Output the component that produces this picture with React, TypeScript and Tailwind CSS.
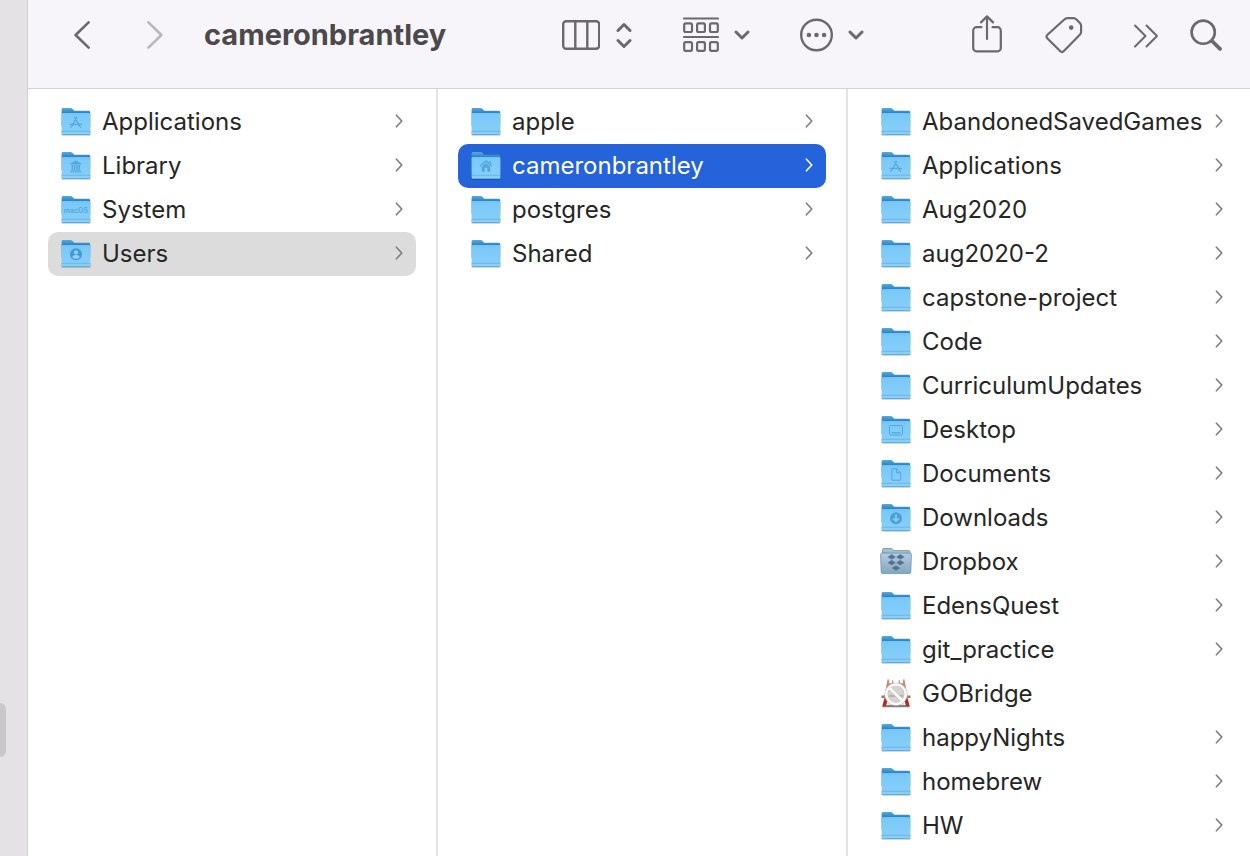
import type { ReactNode } from "react";

type Glyph = "apps" | "library" | "macos" | "user" | "home" | "desktop" | "document" | "download";

type Entry = {
  name: string;
  glyph?: Glyph;
  icon?: "dropbox" | "bridge";
  leaf?: boolean;
  state?: "path" | "active";
};

const root: Entry[] = [
  { name: "Applications", glyph: "apps" },
  { name: "Library", glyph: "library" },
  { name: "System", glyph: "macos" },
  { name: "Users", glyph: "user", state: "path" },
];

const users: Entry[] = [
  { name: "apple" },
  { name: "cameronbrantley", glyph: "home", state: "active" },
  { name: "postgres" },
  { name: "Shared" },
];

const home: Entry[] = [
  { name: "AbandonedSavedGames" },
  { name: "Applications", glyph: "apps" },
  { name: "Aug2020" },
  { name: "aug2020-2" },
  { name: "capstone-project" },
  { name: "Code" },
  { name: "CurriculumUpdates" },
  { name: "Desktop", glyph: "desktop" },
  { name: "Documents", glyph: "document" },
  { name: "Downloads", glyph: "download" },
  { name: "Dropbox", icon: "dropbox" },
  { name: "EdensQuest" },
  { name: "git_practice" },
  { name: "GOBridge", icon: "bridge", leaf: true },
  { name: "happyNights" },
  { name: "homebrew" },
  { name: "HW" },
];

const ink = "#55a6da";

function GlyphMark({ glyph }: { glyph: Glyph }) {
  switch (glyph) {
    case "apps":
      return (
        <g stroke={ink} strokeWidth="1.3" strokeLinecap="round" fill="none">
          <path d="M16.6 11.5 12 20M14.8 11.5l4.8 8.7M10 18.3h7.3M19.4 18.3h2.2M11.2 20.6l-.3.5M20.2 20.6l.4.6" />
        </g>
      );
    case "library":
      return (
        <g fill={ink}>
          <path d="M10.2 13.6 15.8 10.4l5.6 3.2v.8H10.2zM10.8 20.2h10v.8h-10zM10 21.5h11.6v.9H10z" />
          <path d="M11.6 15h1.5v4.8h-1.5zM13.9 15h1.5v4.8h-1.5zM16.2 15h1.5v4.8h-1.5zM18.5 15H20v4.8h-1.5z" />
        </g>
      );
    case "macos":
      return (
        <text x="15.8" y="18.6" textAnchor="middle" fontSize="7" fontWeight="600" fontFamily="Inter, sans-serif" fill={ink}>
          macOS
        </text>
      );
    case "user":
      return (
        <g>
          <circle cx="16" cy="16.2" r="6" fill="#4598d0" />
          <circle cx="16" cy="14.4" r="2.1" fill="#8fd0fa" />
          <path d="M12.2 19.2c.6-1.7 2-2.3 3.8-2.3s3.2.6 3.8 2.3c-1 1-2.3 1.5-3.8 1.5s-2.8-.5-3.8-1.5z" fill="#8fd0fa" />
        </g>
      );
    case "home":
      return (
        <g fill={ink}>
          <path d="M16 10 22.4 15.6l-.9 1L16 11.9l-5.5 4.7-.9-1zM19.3 10.9h1.6v3l-1.6-1.4z" />
          <path d="M11.8 16.5 16 13l4.2 3.5v5.2h-2.8v-3.9h-2.8v3.9h-2.8z" />
        </g>
      );
    case "desktop":
      return (
        <g fill="none" stroke={ink} strokeWidth="1">
          <rect x="9.5" y="11.5" width="13" height="9.5" rx="1" />
          <path d="M11.5 18.7h9" strokeWidth="1.3" />
        </g>
      );
    case "document":
      return (
        <path
          d="M12.5 10.7h4.3l3.9 4v6.8a.7.7 0 0 1-.7.7h-7.5a.7.7 0 0 1-.7-.7v-10.1a.7.7 0 0 1 .7-.7zM16.6 10.9v3.9h3.9"
          fill="none"
          stroke={ink}
          strokeWidth="1"
        />
      );
    case "download":
      return (
        <g>
          <circle cx="16" cy="16.2" r="6" fill="#4fa0d6" />
          <path d="M16 12.6v6.6M13.2 16.5l2.8 2.8 2.8-2.8" fill="none" stroke="#8fd0fa" strokeWidth="1.5" />
        </g>
      );
  }
}

function Folder({ glyph }: { glyph?: Glyph }) {
  return (
    <svg viewBox="0 0 32 32" className="size-8 shrink-0" aria-hidden="true">
      <defs>
        <linearGradient id="front" x1="0" y1="0" x2="0" y2="1">
          <stop offset="0" stopColor="#6fc2f6" />
          <stop offset="0.12" stopColor="#7ac9f8" />
          <stop offset="1" stopColor="#89cffa" />
        </linearGradient>
        <linearGradient id="back" x1="0" y1="0" x2="0" y2="1">
          <stop offset="0" stopColor="#56abdf" />
          <stop offset="0.25" stopColor="#3285c5" />
          <stop offset="1" stopColor="#3285c5" />
        </linearGradient>
      </defs>
      <rect x="1.4" y="24" width="29.2" height="5.8" rx="1.5" fill="#000" opacity="0.22" />
      <path d="M1.6 3.4c0-.8.6-1.4 1.4-1.4h7.2c1.1 0 1.7.3 2.4 1l.9.9c.6.6 1.1.8 2 .8h13.1c.9 0 1.6.6 1.6 1.5V20H1.6z" fill="url(#back)" />
      <path d="M1.6 8.2c0-.8.6-1.3 1.4-1.3h26c.8 0 1.4.5 1.4 1.3v19.2c0 .9-.6 1.5-1.4 1.5H3c-.8 0-1.4-.6-1.4-1.5z" fill="url(#front)" />
      <path d="M2 25.3h28" stroke="#60b2e8" strokeWidth="0.8" />
      <path d="M2.2 28.5h27.6" stroke="#5aa6d8" strokeWidth="0.8" />
      {glyph && <GlyphMark glyph={glyph} />}
    </svg>
  );
}

function DropboxFolder() {
  return (
    <svg viewBox="0 0 32 32" className="size-8 shrink-0" aria-hidden="true">
      <defs>
        <linearGradient id="steel" x1="0" y1="0" x2="0" y2="1">
          <stop offset="0" stopColor="#b3cde0" />
          <stop offset="1" stopColor="#82a6c1" />
        </linearGradient>
      </defs>
      <path d="M2.5 7V3.7c0-.7.5-1.2 1.2-1.2h7.6c.7 0 1.1.3 1.4.8l.8 1.3h15.3c.8 0 1.2.5 1.2 1.2V8z" fill="#a3c0d4" stroke="#728fa5" strokeWidth="0.8" />
      <path d="M.6 8.3c0-.7.5-1.2 1.2-1.2h28.4c.7 0 1.2.5 1.2 1.2l-.6 18c0 .8-.5 1.3-1.3 1.3h-27c-.8 0-1.3-.5-1.3-1.3z" fill="url(#steel)" stroke="#7391a8" strokeWidth="0.8" />
      <g fill="#527391">
        <path d="M11.7 8.3l4.1 2.6-4.1 2.6-4.2-2.6zM20.3 8.3l4.2 2.6-4.2 2.6-4.1-2.6zM11.7 14.1l4.1 2.6-4.1 2.6-4.2-2.6zM20.3 14.1l4.2 2.6-4.2 2.6-4.1-2.6zM16 19.4l4.3 2.7-4.3 2.7-4.3-2.7z" />
      </g>
    </svg>
  );
}

function BridgeApp() {
  return (
    <svg viewBox="0 0 32 32" className="size-8 shrink-0" aria-hidden="true">
      <path d="M8 7h16v20H8z" fill="#e6e4e2" />
      <path d="M1.5 17.5h29V20h-29z" fill="#8a7c78" />
      <path d="M6 27h20l4 2.2H2z" fill="#85807e" />
      <path d="M7.6 1.2h1l.6 4H12l.3-3h1l.2 6L8.5 20 6 28.5H2.5z" fill="#d08571" />
      <path d="M24.4 1.2h-1l-.6 4H20l-.3-3h-1l-.2 6 5 11.8 2.5 8.5h3.5z" fill="#d08571" />
      <path d="M5.5 18 2.2 28.5h3.3L7.9 21zM26.5 18l3.3 10.5h-3.3L24.1 21z" fill="#a82f24" />
      <circle cx="16" cy="16.3" r="9.3" fill="#d6d3d2" />
      <path d="M9 16.8h14V19H9z" fill="#c4aca7" />
      <circle cx="16" cy="16.3" r="9.7" fill="none" stroke="#bab7b6" strokeWidth="3.4" />
      <path d="M9.5 9.8 22.5 22.8" stroke="#bab7b6" strokeWidth="3.8" />
      <circle cx="16" cy="16.3" r="9.7" fill="none" stroke="#fbfbfb" strokeWidth="2.6" />
      <path d="M9.2 9.5 22.8 23.1" stroke="#fbfbfb" strokeWidth="2.9" />
    </svg>
  );
}

function Disclosure({ active }: { active?: boolean }) {
  return (
    <svg viewBox="0 0 8 16" className={active ? "h-4 w-2 shrink-0 text-white" : "h-4 w-2 shrink-0 text-[#7d7d7d]"} aria-hidden="true">
      <path d="M1.4 1.2l5.4 5.8-5.4 5.8" fill="none" stroke="currentColor" strokeWidth="1.6" strokeLinecap="round" strokeLinejoin="round" />
    </svg>
  );
}

const rowStyles = {
  plain: "flex h-11 w-full items-center rounded-[10px] pr-[13px] pl-3 text-left text-[#262626]",
  path: "flex h-11 w-full items-center rounded-[10px] bg-[#dcdcdc] pr-[13px] pl-3 text-left text-[#262626]",
  active: "flex h-11 w-full items-center rounded-[10px] bg-[#2463d9] pr-[13px] pl-3 text-left text-white",
};

function Column({ label, entries, className }: { label: string; entries: Entry[]; className: string }) {
  return (
    <ul aria-label={label} className={className}>
      {entries.map((e) => (
        <li key={e.name}>
          <button type="button" className={rowStyles[e.state ?? "plain"]}>
            {e.icon === "dropbox" ? <DropboxFolder /> : e.icon === "bridge" ? <BridgeApp /> : <Folder glyph={e.glyph} />}
            <span className="min-w-0 flex-1 pl-[10px] whitespace-nowrap">{e.name}</span>
            {!e.leaf && <Disclosure active={e.state === "active"} />}
          </button>
        </li>
      ))}
    </ul>
  );
}

function Tool({ label, className, children }: { label: string; className: string; children: ReactNode }) {
  return (
    <button type="button" aria-label={label} className={className}>
      {children}
    </button>
  );
}

const line = { fill: "none", stroke: "currentColor", strokeLinecap: "round", strokeLinejoin: "round" } as const;

function DownChevron() {
  return (
    <svg viewBox="0 0 16 10" className="h-[10px] w-4" {...line} strokeWidth="3">
      <path d="M2 2l6 6 6-6" />
    </svg>
  );
}

function Toolbar() {
  return (
    <header className="flex h-[89px] shrink-0 items-center border-b border-[#d5d3d6] bg-[#f7f5f9] pr-7 pb-[18px] pl-[46px] text-[#6b696c]">
      <Tool label="Back" className="shrink-0">
        <svg viewBox="0 0 16 28" className="h-7 w-4" {...line} strokeWidth="2.6">
          <path d="M14.6 1.4 1.6 14l13 12.6" />
        </svg>
      </Tool>
      <Tool label="Forward" className="ml-[57px] shrink-0 text-[#b9b7bb]">
        <svg viewBox="0 0 16 28" className="h-7 w-4" {...line} strokeWidth="2.6">
          <path d="M1.4 1.4 14.4 14l-13 12.6" />
        </svg>
      </Tool>
      <h1 className="ml-[41px] min-w-0 flex-1 truncate text-[29px] leading-10 font-bold text-[#4b494c]">cameronbrantley</h1>

      <Tool label="View as columns" className="flex shrink-0 items-center gap-4">
        <svg viewBox="0 0 38 30" className="h-[30px] w-[38px]" {...line} strokeWidth="2.4">
          <rect x="1.2" y="1.2" width="36" height="27.6" rx="3" />
          <path d="M13.3 1v28M25.3 1v28" />
        </svg>
        <svg viewBox="0 0 16 28" className="h-7 w-4" {...line} strokeWidth="3">
          <path d="M2 9.5l6-6 6 6M2 19.5l6 6 6-6" />
        </svg>
      </Tool>
      <Tool label="Group items" className="ml-[51px] flex shrink-0 items-center gap-[15px]">
        <svg viewBox="0 0 36 36" className="size-9" {...line} strokeWidth="2.2">
          <path d="M1 1.5h34M1 20h34" />
          <rect x="1.2" y="6.4" width="7.8" height="8.6" rx="1.5" />
          <rect x="14.1" y="6.4" width="7.8" height="8.6" rx="1.5" />
          <rect x="27" y="6.4" width="7.8" height="8.6" rx="1.5" />
          <rect x="1.2" y="25.2" width="7.8" height="8.6" rx="1.5" />
          <rect x="14.1" y="25.2" width="7.8" height="8.6" rx="1.5" />
          <rect x="27" y="25.2" width="7.8" height="8.6" rx="1.5" />
        </svg>
        <DownChevron />
      </Tool>
      <Tool label="Actions" className="ml-[50px] flex shrink-0 items-center gap-[14px]">
        <svg viewBox="0 0 34 34" className="size-[34px]" {...line} strokeWidth="2.4">
          <circle cx="16.5" cy="17" r="15.3" />
          <g fill="currentColor" stroke="none">
            <circle cx="8.9" cy="17" r="2.3" />
            <circle cx="16.5" cy="17" r="2.3" />
            <circle cx="24.1" cy="17" r="2.3" />
          </g>
        </svg>
        <DownChevron />
      </Tool>
      <Tool label="Share" className="ml-[108px] shrink-0">
        <svg viewBox="0 0 30 42" className="h-[42px] w-[30px]" {...line} strokeWidth="2.2">
          <path d="M9.5 13.2h-5a3.3 3.3 0 0 0-3.3 3.3V34a3.3 3.3 0 0 0 3.3 3.3h21a3.3 3.3 0 0 0 3.3-3.3V16.5a3.3 3.3 0 0 0-3.3-3.3h-5" />
          <path d="M15 25V3M9 8.400 15 2.400l6 6" />
        </svg>
      </Tool>
      <Tool label="Tags" className="ml-[43px] shrink-0">
        <svg viewBox="0 0 38 38" className="size-[38px]" {...line} strokeWidth="2.2">
          <path d="M19.3 3.5c1-1 1.8-1.4 3.1-1.4h6.1c1.2 0 2 .3 2.800 1.200l3.600 3.700c.8.8 1.200 1.600 1.200 2.800v6c0 1.300-.4 2.100-1.300 3L18.600 35.300c-1 1-2.200 1-3.200 0L2.200 22.200c-1-1-1-2.200 0-3.200z" />
          <circle cx="26.2" cy="11.600" r="2.300" fill="currentColor" stroke="none" />
        </svg>
      </Tool>
      <Tool label="More toolbar items" className="ml-[50px] shrink-0">
        <svg viewBox="0 0 26 24" className="mt-[2px] h-6 w-[26px]" {...line} strokeWidth="2">
          <path d="M2 1.500 12.500 12 2 22.500M13.500 1.500 24 12 13.500 22.500" />
        </svg>
      </Tool>
      <Tool label="Search" className="ml-[31px] shrink-0">
        <svg viewBox="0 0 32 32" className="size-8" {...line}>
          <circle cx="13.2" cy="13.2" r="11.6" strokeWidth="2.6" />
          <path d="M22 22l8 7.8" strokeWidth="3.8" />
        </svg>
      </Tool>
    </header>
  );
}

export default function App() {
  return (
    <div className="flex h-screen overflow-hidden bg-white font-['Inter','Liberation_Sans',sans-serif]">
      <aside className="flex w-7 shrink-0 flex-col justify-end border-r border-[#d2d0d3] bg-[#e4e2e5] pb-[99px]">
        <div className="h-[54px] w-[6px] rounded-r-[6px] bg-[#c9c7ca]" />
      </aside>
      <div className="flex min-w-0 flex-1 flex-col">
        <Toolbar />
        <main className="flex min-h-0 flex-1 text-[24px] leading-8">
          <Column label="Macintosh HD" entries={root} className="w-[410px] shrink-0 border-r-2 border-[#e3e3e3] px-5 pt-[11px]" />
          <Column label="Users" entries={users} className="w-[410px] shrink-0 border-r-2 border-[#e3e3e3] px-5 pt-[11px]" />
          <Column label="cameronbrantley" entries={home} className="min-w-0 flex-1 overflow-hidden pt-[11px] pr-[14px] pl-5" />
        </main>
      </div>
    </div>
  );
}
